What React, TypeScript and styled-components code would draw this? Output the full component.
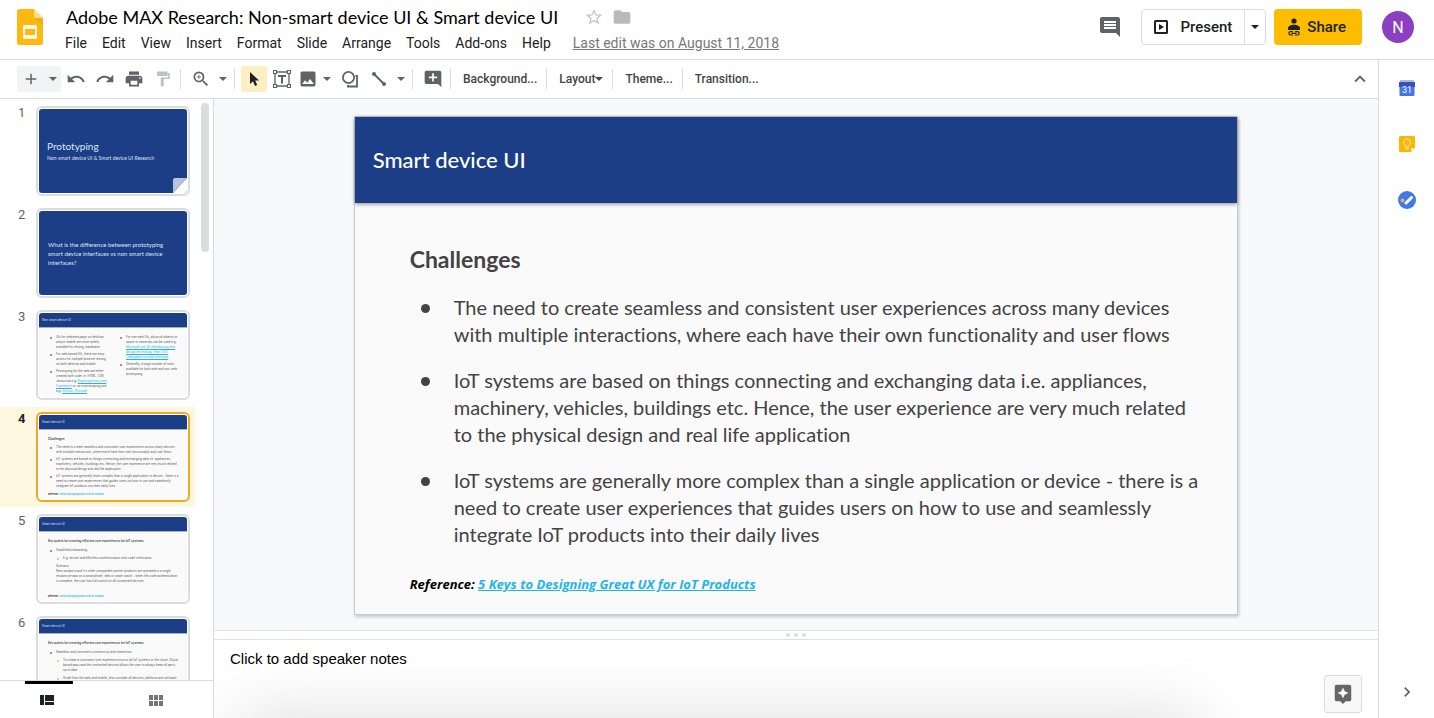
import React from "react";
import styled, { createGlobalStyle } from "styled-components";
import {
  MdAdd,
  MdAddComment,
  MdAssistant,
  MdChevronRight,
  MdComment,
  MdFolder,
  MdFormatPaint,
  MdImage,
  MdKeyboardArrowUp,
  MdPrint,
  MdRedo,
  MdStarBorder,
  MdUndo,
  MdZoomIn,
} from "react-icons/md";

const ui = `Roboto, "Liberation Sans", sans-serif`;
const slideFont = `Lato, "Open Sans", sans-serif`;
const line = "#dadce0";
const navy = "#1b3e87";
const grey = "#5f6368";

const GlobalStyle = createGlobalStyle`
  *, *::before, *::after { box-sizing: border-box; }
  html, body { margin: 0; height: 100%; }
  #root { height: 100%; }
  body { background: #fff; color: #202124; font-family: ${ui}; font-variant-ligatures: none; overflow: hidden; }
  button { border: 0; padding: 0; background: none; color: inherit; font-family: inherit; cursor: pointer; }
  svg { display: block; flex: none; }
  h1, h2, h3, p, ul, ol { margin: 0; padding: 0; list-style: none; }
`;

const Page = styled.div`
  display: flex;
  flex-direction: column;
  height: 100%;
`;

/* ---------- header ---------- */

const Header = styled.header`
  display: flex;
  align-items: flex-start;
  flex: none;
  height: 60px;
  padding: 0 20px 0 17px;
  border-bottom: 1px solid ${line};
`;

const Logo = styled.a`
  margin: 9px 15px 0 0;
`;

const TitleBlock = styled.div`
  flex: 1;
  min-width: 0;
  padding-top: 4px;
  white-space: nowrap;
`;

const TitleRow = styled.div`
  display: flex;
  align-items: center;
  height: 25px;
  padding-left: 8px;
`;

const DocTitle = styled.h1`
  margin-right: 26px;
  font: 400 18px/24px ${slideFont};
  color: #000;
`;

const TitleIcon = styled.button`
  margin-right: 8px;
  color: ${(p) => p.color};
`;

const Menu = styled.nav`
  display: flex;
  align-items: center;
  gap: 1px;
  height: 28px;
  font-size: 14px;
`;

const MenuItem = styled.button`
  padding: 0 7px;
  font-size: 14px;
  line-height: 20px;
`;

const LastEdit = styled.a`
  margin-left: 14px;
  color: #777;
  line-height: 20px;
`;

const HeaderActions = styled.div`
  display: flex;
  align-items: center;
  padding-top: 9px;
  color: #202124;
`;

const CommentButton = styled.button`
  margin-right: 19px;
  color: ${grey};
`;

const Present = styled.div`
  display: flex;
  height: 36px;
  margin-right: 8px;
  border: 1px solid ${line};
  border-radius: 4px;
`;

const PresentMain = styled.button`
  display: flex;
  align-items: center;
  gap: 12px;
  padding: 0 12px;
  font-size: 15px;
  font-weight: 500;
`;

const PresentMore = styled.button`
  display: flex;
  align-items: center;
  justify-content: center;
  width: 21px;
  border-left: 1px solid ${line};
`;

const Share = styled.button`
  display: flex;
  align-items: center;
  gap: 6px;
  height: 36px;
  margin-right: 20px;
  padding: 0 16px 0 13px;
  border-radius: 4px;
  background: #fdbc00;
  font-size: 15px;
  font-weight: 500;
`;

const Avatar = styled.button`
  width: 32px;
  height: 32px;
  border-radius: 50%;
  background: #8c3fc0;
  color: #fff;
  font-size: 16px;
`;

/* ---------- frame ---------- */

const Frame = styled.div`
  display: flex;
  flex: 1;
  min-height: 0;
`;

const Main = styled.div`
  display: flex;
  flex-direction: column;
  flex: 1;
  min-width: 0;
`;

const Workspace = styled.div`
  display: flex;
  flex: 1;
  min-height: 0;
`;

/* ---------- toolbar ---------- */

const Toolbar = styled.div`
  display: flex;
  align-items: center;
  flex: none;
  gap: 1px;
  height: 39px;
  padding: 0 4px 0 17px;
  border-bottom: 1px solid ${line};
  color: ${grey};
`;

const ToolGroup = styled.div<{ $filled?: boolean }>`
  display: flex;
  border-radius: 2px;
  background: ${(p) => (p.$filled ? "#f1f3f4" : "none")};
`;

const toolWidths = { regular: 28, select: 26, compact: 22, caret: 16 };

const Tool = styled.button<{ $size?: keyof typeof toolWidths; $active?: boolean; $faded?: boolean }>`
  display: flex;
  align-items: center;
  justify-content: center;
  width: ${(p) => toolWidths[p.$size ?? "regular"]}px;
  height: 26px;
  border-radius: 2px;
  background: ${(p) => (p.$active ? "#feefc3" : "none")};
  color: ${(p) => (p.$active ? "#202124" : "inherit")};
  opacity: ${(p) => (p.$faded ? 0.4 : 1)};
`;

const TextTool = styled.button`
  display: flex;
  align-items: center;
  padding: 0 6px;
  height: 26px;
  color: #444;
  font-size: 12px;
  font-weight: 500;
`;

const Separator = styled.span`
  width: 1px;
  height: 20px;
  margin: 0 5px 0 2px;
  background: ${line};
`;

const CollapseTool = styled(Tool)`
  margin-left: auto;
`;

/* ---------- filmstrip ---------- */

const Filmstrip = styled.aside`
  position: relative;
  display: flex;
  flex-direction: column;
  flex: none;
  width: 214px;
  border-right: 1px solid ${line};
`;

const ThumbList = styled.ol`
  display: flex;
  flex-direction: column;
  flex: 1;
  gap: 2px;
  min-height: 0;
  padding-top: 2px;
  overflow: hidden;
`;

const ThumbRow = styled.li<{ $active?: boolean }>`
  display: flex;
  align-items: flex-start;
  flex: none;
  width: 195px;
  padding: 5px 5px 5px 0;
  background: ${(p) => (p.$active ? "#fef7e0" : "none")};
  color: ${(p) => (p.$active ? "#202124" : grey)};
  font-size: 13px;
  font-weight: ${(p) => (p.$active ? 700 : 400)};
  line-height: 14px;
`;

const ThumbNumber = styled.span`
  width: 36px;
  padding-left: 18px;
`;

const ThumbBox = styled.button<{ $active?: boolean }>`
  width: 154px;
  padding: 1px;
  border: 2px solid ${(p) => (p.$active ? "#f5a623" : line)};
  border-radius: 6px;
  background: #fff;
  text-align: left;
`;

const Mini = styled.span<{ $dark?: boolean }>`
  position: relative;
  display: flex;
  flex-direction: column;
  justify-content: ${(p) => (p.$dark ? "center" : "flex-start")};
  height: 84px;
  padding: ${(p) => (p.$dark ? "0 8px" : "0")};
  border-radius: 3px;
  overflow: hidden;
  background: ${(p) => (p.$dark ? navy : "#fafafa")};
  color: ${(p) => (p.$dark ? "#dfe5f2" : "#555")};
  font: 400 3px/5px Inter, "Open Sans", sans-serif;
  white-space: nowrap;
`;

const MiniTitle = styled.span`
  font-family: ${slideFont};
  font-size: 10px;
  line-height: 14px;
`;

const MiniSubtitle = styled.span`
  font-family: ${slideFont};
  font-size: 5px;
  line-height: 10px;
`;

const MiniQuestion = styled.span`
  padding-left: 1px;
  font-family: ${slideFont};
  font-size: 6px;
  line-height: 9px;
`;

const Fold = styled.svg`
  position: absolute;
  right: 0;
  bottom: 0;
`;

const MiniBar = styled.span`
  flex: none;
  height: 15px;
  padding-left: 3px;
  border-bottom: 1px solid #a3b0cd;
  background: ${navy};
  color: #dfe5f2;
  line-height: 15px;
`;

const MiniBody = styled.span<{ $loose?: boolean }>`
  display: flex;
  flex: 1;
  flex-direction: column;
  gap: ${(p) => (p.$loose ? 3 : 2)}px;
  padding: 6px 0 3px 9px;
`;

const MiniColumns = styled.span`
  display: grid;
  grid-template-columns: 70px 1fr;
  padding: 7px 0 0 9px;
`;

const MiniColumn = styled.span`
  display: flex;
  flex-direction: column;
  gap: 2px;
`;

const MiniHeading = styled.strong`
  line-height: 7px;
`;

const MiniItem = styled.span<{ $level?: number; $plain?: boolean }>`
  display: flex;
  padding-left: ${(p) => (p.$level === 2 ? 9 : 2)}px;

  &::before {
    content: "";
    flex: none;
    width: 2px;
    height: 2px;
    margin: 2px 4px 0 0;
    border-radius: 1px;
    background: ${(p) => (p.$plain ? "none" : p.$level === 2 ? "#bbb" : "#777")};
  }
`;

const MiniLink = styled.span`
  color: #1fb5ea;
  text-decoration: underline;
`;

const MiniReference = styled.strong`
  margin-top: auto;
  color: #222;
  font-size: 2px;
  line-height: 4px;

  ${MiniLink} { text-decoration: none; }
`;

const ScrollThumb = styled.span`
  position: absolute;
  top: 4px;
  right: 4px;
  width: 8px;
  height: 149px;
  border-radius: 4px;
  background: ${line};
`;

const ViewTabs = styled.div`
  display: flex;
  justify-content: space-between;
  flex: none;
  height: 38px;
  padding: 0 31px 0 25px;
  border-top: 1px solid ${line};
`;

const ViewTab = styled.button<{ $active?: boolean }>`
  display: flex;
  justify-content: center;
  width: 48px;
  padding: 11px 4px 0 0;
  border-top: 3px solid ${(p) => (p.$active ? "#000" : "transparent")};
  color: ${(p) => (p.$active ? "#202124" : "#757575")};
`;

/* ---------- stage ---------- */

const Editor = styled.main`
  display: flex;
  flex-direction: column;
  flex: 1;
  min-width: 0;
`;

const Stage = styled.section`
  display: flex;
  align-items: flex-start;
  justify-content: center;
  flex: 1;
  min-height: 0;
  padding-top: 17px;
  overflow: hidden;
  background: #f8f9fb;
`;

const Slide = styled.article`
  display: flex;
  flex-direction: column;
  width: 76%;
  border: 1px solid #c8cad0;
  background: #fafafa;
  box-shadow: 1px 2px 3px rgba(0, 0, 0, 0.2);
  color: #434343;
  font-family: ${slideFont};
`;

const SlideHeader = styled.header`
  display: flex;
  align-items: center;
  height: 86px;
  padding: 0 18px;
  background: ${navy};
  box-shadow: 0 1px 4px rgba(0, 0, 0, 0.45);
  color: #fff;
`;

const SlideTitle = styled.h2`
  font-size: 22px;
  font-weight: 500;
  line-height: 28px;
`;

const SlideBody = styled.div`
  padding: 42px 20px 20px 55px;
`;

const SlideHeading = styled.h3`
  margin-bottom: 21px;
  font-size: 23px;
  font-weight: 700;
  line-height: 28px;
`;

const BulletList = styled.ul`
  display: flex;
  flex-direction: column;
  gap: 19px;
`;

const Bullet = styled.li`
  display: flex;
  font-size: 20px;
  line-height: 27px;
  white-space: nowrap;

  &::before {
    content: "";
    flex: none;
    width: 9px;
    height: 9px;
    margin: 10px 24px 0 11px;
    border-radius: 50%;
    background: #434343;
  }
`;

const Reference = styled.p`
  margin-top: 26px;
  color: #000;
  font-family: "Open Sans", sans-serif;
  font-size: 13px;
  font-style: italic;
  font-weight: 700;
  line-height: 20px;

  a { color: #1fb5ea; }
`;

/* ---------- notes ---------- */

const ResizeHandle = styled.div`
  display: flex;
  align-items: center;
  justify-content: center;
  gap: 4px;
  flex: none;
  height: 10px;
  border: solid #e0e0e0;
  border-width: 1px 0;

  span { width: 4px; height: 4px; border-radius: 50%; background: ${line}; }
`;

const Notes = styled.section`
  position: relative;
  flex: none;
  height: 78px;
  overflow: hidden;
`;

const NotesField = styled.textarea`
  display: block;
  width: 100%;
  height: 100%;
  padding: 9px 16px;
  border: 0;
  outline: 0;
  resize: none;
  font: 400 15px/20px "Liberation Sans", Arial, sans-serif;

  &::placeholder { color: #000; opacity: 1; }
`;

const DockShadow = styled.div`
  position: absolute;
  top: 100%;
  left: 24px;
  right: 180px;
  height: 60px;
  box-shadow: 0 0 70px rgba(0, 0, 0, 0.15);
  pointer-events: none;
`;

const Explore = styled.button`
  position: absolute;
  right: 16px;
  bottom: 5px;
  display: flex;
  align-items: center;
  justify-content: center;
  width: 38px;
  height: 38px;
  border: 1px solid ${line};
  border-radius: 3px;
  background: #f8f8f8;
  color: #666;
`;

/* ---------- side panel ---------- */

const SidePanel = styled.aside`
  display: flex;
  flex-direction: column;
  flex: none;
  width: 56px;
  border-left: 1px solid ${line};
`;

const PanelButton = styled.button<{ $last?: boolean }>`
  display: flex;
  align-items: center;
  justify-content: center;
  height: ${(p) => (p.$last ? 52 : 56)}px;
  margin-top: ${(p) => (p.$last ? "auto" : 0)};
  color: ${grey};
`;

/* ---------- icons ---------- */

const SlidesLogo = () => (
  <svg width="26" height="36" viewBox="0 0 26 36">
    <path d="M2.500 0H17l9 9v24.500a2.500 2.500 0 0 1-2.500 2.500h-21A2.500 2.500 0 0 1 0 33.500v-31A2.500 2.500 0 0 1 2.500 0z" fill="#fbb912" />
    <path d="M17 9h9v8z" fill="#eba010" opacity=".5" />
    <path d="M17 0l9 9h-6.500A2.500 2.500 0 0 1 17 6.500z" fill="#fde08e" />
    <path d="M7.500 16h11a1.500 1.500 0 0 1 1.500 1.500v11a1.500 1.500 0 0 1-1.500 1.500h-11A1.500 1.500 0 0 1 6 28.500v-11A1.500 1.500 0 0 1 7.500 16zM8 20v6h10v-6z" fill="#fff8e1" fillRule="evenodd" />
  </svg>
);

const Caret = () => (
  <svg width="8" height="4" viewBox="0 0 8 4">
    <path d="M0 0h8L4 4z" fill="currentColor" />
  </svg>
);

const PlayBox = () => (
  <svg width="14" height="14" viewBox="0 0 14 14">
    <rect x="1" y="1" width="12" height="12" rx=".5" fill="none" stroke="currentColor" strokeWidth="2" />
    <path d="M5 4l5 3-5 3z" fill="currentColor" />
  </svg>
);

const ShareIcon = () => (
  <svg width="14" height="18" viewBox="0 0 14 18">
    <circle cx="7" cy="3" r="2.600" fill="#202124" />
    <path d="M1 12V10.500C1 8 4 6.800 7 6.800s6 1.200 6 3.700V12z" fill="#202124" />
    <path d="M6 13.700H3.500a1.650 1.650 0 0 0 0 3.300H6M8 13.700h2.500a1.650 1.650 0 0 1 0 3.300H8M4.500 15.350h5" fill="none" stroke="#202124" strokeWidth="1.200" />
  </svg>
);

const CursorIcon = () => (
  <svg width="12" height="16" viewBox="0 0 12 16">
    <path d="M2 1v12l3-2.800L7 15l2.200-1-2-4.500H11z" fill="currentColor" />
  </svg>
);

const TextBoxIcon = () => (
  <svg width="18" height="18" viewBox="0 0 18 18" fill="none" stroke="currentColor">
    <path d="M4 2h10M4 16h10M2 4v10M16 4v10" strokeWidth="1.300" />
    <path d="M.5.5h3v3h-3zM14.500.5h3v3h-3zM.5 14.500h3v3h-3zM14.500 14.500h3v3h-3z" strokeWidth="1.200" />
    <path d="M5 6h8M9 6v7.500" strokeWidth="2" />
  </svg>
);

const ShapeIcon = () => (
  <svg width="18" height="18" viewBox="0 0 18 18" fill="none" stroke="currentColor" strokeWidth="1.800">
    <circle cx="7.500" cy="7.500" r="5.600" />
    <path d="M14.500 6H16v10.500H7V15" />
  </svg>
);

const LineIcon = () => (
  <svg width="16" height="16" viewBox="0 0 16 16">
    <path d="M3 3l10 10" stroke="currentColor" strokeWidth="2" />
    <circle cx="3" cy="3" r="2" fill="currentColor" />
    <circle cx="13" cy="13" r="2" fill="currentColor" />
  </svg>
);

const FilmstripIcon = () => (
  <svg width="14" height="10" viewBox="0 0 14 10" fill="currentColor">
    <path d="M0 0h4v10H0zM5 0h9v6H5zM5 7h9v3H5z" />
  </svg>
);

const GridIcon = () => (
  <svg width="14" height="11" viewBox="0 0 14 11" fill="currentColor">
    <path d="M0 0h4v5H0zM5 0h4v5H5zM10 0h4v5h-4zM0 6h4v5H0zM5 6h4v5H5zM10 6h4v5h-4z" />
  </svg>
);

const CalendarIcon = () => (
  <svg width="16" height="16" viewBox="0 0 16 16">
    <path d="M1 0h14v3H1z" fill="#b9bcc2" />
    <path d="M0 2h16v5H0z" fill="#3450c4" />
    <path d="M.5 7h15v8a1 1 0 0 1-1 1h-13a1 1 0 0 1-1-1z" fill="#4377e8" />
    <text x="8" y="13" textAnchor="middle" fontFamily="Roboto, sans-serif" fontSize="9" fill="#fff">31</text>
  </svg>
);

const KeepIcon = () => (
  <svg width="16" height="16" viewBox="0 0 16 16">
    <path d="M1.500 0h13A1.500 1.500 0 0 1 16 1.500V12l-4 4H1.500A1.500 1.500 0 0 1 0 14.500v-13A1.500 1.500 0 0 1 1.500 0z" fill="#fbb606" />
    <path d="M12 16v-4h4z" fill="#fde3a0" />
    <path d="M6.500 11V9.600a3.500 3.500 0 1 1 3 0V11zM6.500 13h3" fill="none" stroke="#fff3cf" />
  </svg>
);

const TasksIcon = () => (
  <svg width="18" height="18" viewBox="0 0 18 18">
    <circle cx="9" cy="9" r="9" fill="#4279ea" />
    <path d="M8 12l5.500-5.500" stroke="#fff" strokeWidth="3" strokeLinecap="round" />
    <circle cx="4.500" cy="9.500" r="2" fill="#d8b544" />
  </svg>
);

/* ---------- content ---------- */

const menuItems = ["File", "Edit", "View", "Insert", "Format", "Slide", "Arrange", "Tools", "Add-ons", "Help"];

const bullets = [
  [
    "The need to create seamless and consistent user experiences across many devices",
    "with multiple interactions, where each have their own functionality and user flows",
  ],
  [
    "IoT systems are based on things connecting and exchanging data i.e. appliances,",
    "machinery, vehicles, buildings etc. Hence, the user experience are very much related",
    "to the physical design and real life application",
  ],
  [
    "IoT systems are generally more complex than a single application or device - there is a",
    "need to create user experiences that guides users on how to use and seamlessly",
    "integrate IoT products into their daily lives",
  ],
];

const Lines = ({ of }: { of: string[] }) => (
  <span>
    {of.map((text, i) => (
      <React.Fragment key={i}>
        {i > 0 && <br />}
        {text}
      </React.Fragment>
    ))}
  </span>
);

const MiniRef = () => (
  <MiniReference>
    Reference: <MiniLink>5 Keys to Designing Great UX for IoT Products</MiniLink>
  </MiniReference>
);

const thumbs: React.ReactNode[] = [
  <Mini $dark>
    <MiniTitle>Prototyping</MiniTitle>
    <MiniSubtitle>Non-smart device UI &amp; Smart device UI Research</MiniSubtitle>
    <Fold width="14" height="15" viewBox="0 0 14 15">
      <path d="M14 0v15H0z" fill="#fff" />
      <path d="M2 0h12L0 15V2a2 2 0 0 1 2-2z" fill="#b9c2dc" />
    </Fold>
  </Mini>,
  <Mini $dark>
    <MiniQuestion>
      <Lines of={["What is the difference between prototyping", "smart device interfaces vs non smart device", "interfaces?"]} />
    </MiniQuestion>
  </Mini>,
  <Mini>
    <MiniBar>Non smart device UI</MiniBar>
    <MiniColumns>
      <MiniColumn>
        <MiniItem><Lines of={["UIs for websites/apps on desktop", "and/or mobile are more widely", "available for testing (hardware)"]} /></MiniItem>
        <MiniItem><Lines of={["For web based UIs, there are easy", "access for multiple browser testing", "on both desktop and mobile"]} /></MiniItem>
        <MiniItem>
          <span>
            Prototyping for the web are either<br />
            created with code i.e. HTML, CSS,<br />
            Javascript e.g. <MiniLink>Bootstrap Front-end</MiniLink><br />
            <MiniLink>Framework</MiniLink> or via a prototyping tool<br />
            e.g. <MiniLink>Invision, Principle</MiniLink>
          </span>
        </MiniItem>
      </MiniColumn>
      <MiniColumn>
        <MiniItem>
          <span>
            For non web UIs, physical objects or<br />
            space or materials can be used e.g.<br />
            <MiniLink>Microsoft use 3D whiteboxing new<br />design technology, Atari VCS,<br />videogame console prototype</MiniLink>
          </span>
        </MiniItem>
        <MiniItem><Lines of={["Generally, a large number of tools", "available for both web and non-web", "prototyping"]} /></MiniItem>
      </MiniColumn>
    </MiniColumns>
  </Mini>,
  <Mini>
    <MiniBar>Smart device UI</MiniBar>
    <MiniBody>
      <MiniHeading>Challenges</MiniHeading>
      {bullets.map((b, i) => (
        <MiniItem key={i}><Lines of={b} /></MiniItem>
      ))}
      <MiniRef />
    </MiniBody>
  </Mini>,
  <Mini>
    <MiniBar>Smart device UI</MiniBar>
    <MiniBody $loose>
      <MiniHeading>Key points for creating efficient user experiences for IoT systems</MiniHeading>
      <MiniItem>Simplified onboarding</MiniItem>
      <MiniItem $level={2}>E.g. secure and effortless authentication with code verification</MiniItem>
      <MiniItem $plain>
        <Lines
          of={[
            "Scenario:",
            "Nest products and it's other compatible partner products are operated in a single",
            "responsive app on a smartphone, web or smart watch - when the code authentication",
            "is complete, the user has full control on all connected devices",
          ]}
        />
      </MiniItem>
      <MiniRef />
    </MiniBody>
  </Mini>,
  <Mini>
    <MiniBar>Smart device UI</MiniBar>
    <MiniBody $loose>
      <MiniHeading>Key points for creating efficient user experiences for IoT systems</MiniHeading>
      <MiniItem>Seamless and consistent connectivity and interaction</MiniItem>
      <MiniItem $level={2}>
        <Lines
          of={[
            "To create a consistent user experience across all IoT systems in the cloud. Cloud",
            "based apps and the connected devices allows the user to always keep all parts",
            "up to date",
          ]}
        />
      </MiniItem>
      <MiniItem $level={2}>Aside from the web and mobile, also consider all devices, platform and software</MiniItem>
    </MiniBody>
  </Mini>,
];

export default function App() {
  const active = 3;
  return (
    <Page>
      <GlobalStyle />
      <Header>
        <Logo href="#" aria-label="Slides home"><SlidesLogo /></Logo>
        <TitleBlock>
          <TitleRow>
            <DocTitle>Adobe MAX Research: Non-smart device UI &amp; Smart device UI</DocTitle>
            <TitleIcon color="#c4c7c9" aria-label="Star"><MdStarBorder size={20} /></TitleIcon>
            <TitleIcon color="#b8babc" aria-label="Move to folder"><MdFolder size={20} /></TitleIcon>
          </TitleRow>
          <Menu>
            {menuItems.map((m) => <MenuItem key={m}>{m}</MenuItem>)}
            <LastEdit href="#">Last edit was on August 11, 2018</LastEdit>
          </Menu>
        </TitleBlock>
        <HeaderActions>
          <CommentButton aria-label="Open comment history"><MdComment size={24} /></CommentButton>
          <Present>
            <PresentMain><PlayBox />Present</PresentMain>
            <PresentMore aria-label="Present options"><Caret /></PresentMore>
          </Present>
          <Share><ShareIcon />Share</Share>
          <Avatar aria-label="Account">N</Avatar>
        </HeaderActions>
      </Header>

      <Frame>
        <Main>
          <Toolbar role="toolbar">
            <ToolGroup $filled>
              <Tool aria-label="New slide"><MdAdd size={18} /></Tool>
              <Tool $size="caret" aria-label="New slide with layout"><Caret /></Tool>
            </ToolGroup>
            <Tool aria-label="Undo"><MdUndo size={20} /></Tool>
            <Tool aria-label="Redo"><MdRedo size={20} /></Tool>
            <Tool aria-label="Print"><MdPrint size={20} /></Tool>
            <Tool $faded aria-label="Paint format"><MdFormatPaint size={18} /></Tool>
            <Separator />
            <ToolGroup>
              <Tool aria-label="Zoom"><MdZoomIn size={20} /></Tool>
              <Tool $size="caret" aria-label="Zoom options"><Caret /></Tool>
            </ToolGroup>
            <Separator />
            <Tool $active $size="select" aria-label="Select"><CursorIcon /></Tool>
            <Tool aria-label="Text box"><TextBoxIcon /></Tool>
            <ToolGroup>
              <Tool $size="compact" aria-label="Insert image"><MdImage size={20} /></Tool>
              <Tool $size="caret" aria-label="Image options"><Caret /></Tool>
            </ToolGroup>
            <Tool aria-label="Shape"><ShapeIcon /></Tool>
            <ToolGroup>
              <Tool aria-label="Line"><LineIcon /></Tool>
              <Tool $size="caret" aria-label="Line options"><Caret /></Tool>
            </ToolGroup>
            <Separator />
            <Tool aria-label="Add comment"><MdAddComment size={20} /></Tool>
            <Separator />
            <TextTool>Background...</TextTool>
            <Separator />
            <TextTool>Layout<Caret /></TextTool>
            <Separator />
            <TextTool>Theme...</TextTool>
            <Separator />
            <TextTool>Transition...</TextTool>
            <CollapseTool aria-label="Hide the menus"><MdKeyboardArrowUp size={22} /></CollapseTool>
          </Toolbar>

          <Workspace>
            <Filmstrip>
              <ThumbList>
                {thumbs.map((t, i) => (
                  <ThumbRow key={i} $active={i === active}>
                    <ThumbNumber>{i + 1}</ThumbNumber>
                    <ThumbBox $active={i === active}>{t}</ThumbBox>
                  </ThumbRow>
                ))}
              </ThumbList>
              <ScrollThumb />
              <ViewTabs>
                <ViewTab $active aria-label="Filmstrip view"><FilmstripIcon /></ViewTab>
                <ViewTab aria-label="Grid view"><GridIcon /></ViewTab>
              </ViewTabs>
            </Filmstrip>

            <Editor>
              <Stage>
                <Slide>
                  <SlideHeader><SlideTitle>Smart device UI</SlideTitle></SlideHeader>
                  <SlideBody>
                    <SlideHeading>Challenges</SlideHeading>
                    <BulletList>
                      {bullets.map((b, i) => <Bullet key={i}><Lines of={b} /></Bullet>)}
                    </BulletList>
                    <Reference>
                      Reference: <a href="#">5 Keys to Designing Great UX for IoT Products</a>
                    </Reference>
                  </SlideBody>
                </Slide>
              </Stage>
              <ResizeHandle><span /><span /><span /></ResizeHandle>
              <Notes>
                <NotesField aria-label="Speaker notes" placeholder="Click to add speaker notes" />
                <DockShadow />
                <Explore aria-label="Explore"><MdAssistant size={22} /></Explore>
              </Notes>
            </Editor>
          </Workspace>
        </Main>

        <SidePanel>
          <PanelButton aria-label="Calendar"><CalendarIcon /></PanelButton>
          <PanelButton aria-label="Keep"><KeepIcon /></PanelButton>
          <PanelButton aria-label="Tasks"><TasksIcon /></PanelButton>
          <PanelButton $last aria-label="Hide side panel"><MdChevronRight size={20} /></PanelButton>
        </SidePanel>
      </Frame>
    </Page>
  );
}
